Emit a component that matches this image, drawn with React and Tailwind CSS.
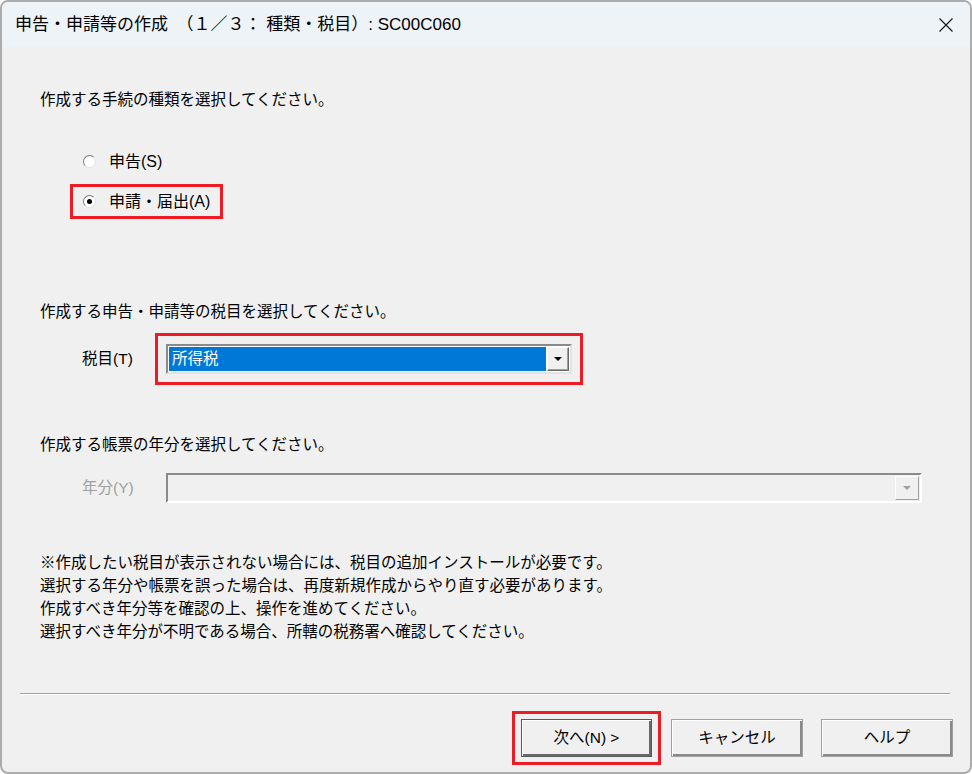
const Radio = ({ checked }) => (
  <span className="flex h-[13px] w-[13px] items-center justify-center rounded-full border border-t-[#7a7a7a] border-l-[#7a7a7a] border-r-[#e3e3e3] border-b-[#e3e3e3] bg-white">
    {checked && <span className="h-[5px] w-[5px] rounded-full bg-black" />}
  </span>
);

const Arrow = ({ color }) => (
  <svg width="8" height="4" viewBox="0 0 8 4">
    <path d="M0 0h8L4 4z" fill={color} />
  </svg>
);

const Button = ({ children, primary }) => (
  <button
    className={
      primary
        ? 'flex h-[38px] w-[131px] items-center justify-center border border-[#5a5a5a] bg-[#f0f0f0] text-[15.5px] shadow-[inset_1px_1px_0_#fff,inset_-2px_-2px_0_#696969]'
        : 'flex h-[38px] w-[132px] items-center justify-center border border-[#a0a0a0] bg-[#f0f0f0] text-[15.5px] shadow-[inset_1px_1px_0_#fff,inset_-2px_-2px_0_#8a8a8a]'
    }
  >
    {children}
  </button>
);

export default function App() {
  return (
    <div className="h-[774px] w-[972px] overflow-hidden rounded-[8px] border-2 border-[#acacac] bg-[#f0f0f0] font-['Liberation_Sans','Noto_Sans_CJK_JP',sans-serif] text-[15.5px] text-black">
      <div className="flex h-[45px] items-center justify-between bg-[#eef3f8] pl-[13px] pr-[17px]">
        <span className="text-[17px] leading-[20px]">申告・申請等の作成　（１／３： 種類・税目）: SC00C060</span>
        <svg width="14" height="14" viewBox="0 0 14 14">
          <path d="M0.5 0.5L13.5 13.5M13.5 0.5L0.5 13.5" stroke="#1a1a1a" strokeWidth="1.2" />
        </svg>
      </div>

      <div className="pl-[38px]">
        <p className="mt-[43px] leading-[20px]">作成する手続の種類を選択してください。</p>

        <div className="mt-[34px] ml-[30px] flex flex-col items-start gap-[5px]">
          <div className="flex h-[35px] items-center gap-[13px] border-[3px] border-transparent pl-[10px] pr-[10px]">
            <Radio />
            <span className="text-[16px] leading-[20px]">申告(S)</span>
          </div>
          <div className="flex h-[35px] items-center gap-[13px] border-[3px] border-[#ed1c24] pl-[10px] pr-[10px]">
            <Radio checked />
            <span className="text-[16px] leading-[20px]">申請・届出(A)</span>
          </div>
        </div>

        <p className="mt-[83px] leading-[20px]">作成する申告・申請等の税目を選択してください。</p>

        <div className="mt-[11px] flex items-center">
          <span className="ml-[42px] w-[73px] leading-[20px]">税目(T)</span>
          <div className="border-[3px] border-[#ed1c24] p-[8px]">
            <div className="flex h-[30px] w-[406px] border-2 border-t-[#8a8a8a] border-l-[#8a8a8a] border-r-[#e3e3e3] border-b-[#e3e3e3] bg-white p-[1px]">
              <div className="flex flex-1 items-center bg-[#0078d7] pl-[3px] leading-[20px] text-white">所得税</div>
              <div className="ml-[1px] flex w-[22px] items-center justify-center border border-t-white border-l-white border-r-[#696969] border-b-[#696969] bg-[#f0f0f0] shadow-[inset_-1px_-1px_0_#a0a0a0]">
                <Arrow color="#000" />
              </div>
            </div>
          </div>
        </div>

        <p className="mt-[50px] leading-[20px]">作成する帳票の年分を選択してください。</p>

        <div className="mt-[18px] flex items-center">
          <span className="ml-[42px] w-[84px] leading-[20px] text-[#a0a0a0]">年分(Y)</span>
          <div className="flex h-[30px] w-[756px] border-2 border-t-[#8a8a8a] border-l-[#8a8a8a] border-r-[#ffffff] border-b-[#ffffff] bg-[#f0f0f0] p-[1px]">
            <div className="flex-1" />
            <div className="flex w-[24px] items-center justify-center border border-t-white border-l-white border-r-[#a0a0a0] border-b-[#a0a0a0] bg-[#f0f0f0]">
              <Arrow color="#a0a0a0" />
            </div>
          </div>
        </div>

        <div className="mt-[48px] leading-[23px]">
          <p>※作成したい税目が表示されない場合には、税目の追加インストールが必要です。</p>
          <p>選択する年分や帳票を誤った場合は、再度新規作成からやり直す必要があります。</p>
          <p>作成すべき年分等を確認の上、操作を進めてください。</p>
          <p>選択すべき年分が不明である場合、所轄の税務署へ確認してください。</p>
        </div>
      </div>

      <div className="mt-[50px] ml-[18px] mr-[20px] border-t border-b border-t-[#a0a0a0] border-b-white" />

      <div className="mt-[16px] flex items-center justify-end pr-[17px]">
        <div className="border-[3px] border-[#ed1c24] px-[6px] py-[5px]">
          <Button primary>次へ(N) &gt;</Button>
        </div>
        <div className="ml-[10px]">
          <Button>キャンセル</Button>
        </div>
        <div className="ml-[18px]">
          <Button>ヘルプ</Button>
        </div>
      </div>
    </div>
  );
}
